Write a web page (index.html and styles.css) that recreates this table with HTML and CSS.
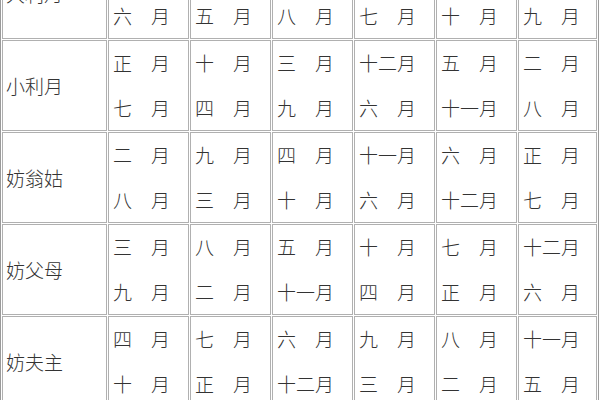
FILE: index.html
```html
<!DOCTYPE html>
<html lang="zh">
<head>
<meta charset="utf-8">
<title>嫁娶月份表</title>
<link rel="stylesheet" href="styles.css">
</head>
<body>
<table class="months">
  <colgroup>
    <col class="c-label"><col class="c-m"><col class="c-m"><col class="c-m"><col class="c-m"><col class="c-m"><col class="c-last">
  </colgroup>
  <tr>
    <td class="label">大利月</td>
    <td><div class="ln">十二月</div><div class="ln">六　月</div></td>
    <td><div class="ln">十一月</div><div class="ln">五　月</div></td>
    <td><div class="ln">二　月</div><div class="ln">八　月</div></td>
    <td><div class="ln">正　月</div><div class="ln">七　月</div></td>
    <td><div class="ln">四　月</div><div class="ln">十　月</div></td>
    <td><div class="ln">三　月</div><div class="ln">九　月</div></td>
  </tr>
  <tr>
    <td class="label">小利月</td>
    <td><div class="ln">正　月</div><div class="ln">七　月</div></td>
    <td><div class="ln">十　月</div><div class="ln">四　月</div></td>
    <td><div class="ln">三　月</div><div class="ln">九　月</div></td>
    <td><div class="ln">十二月</div><div class="ln">六　月</div></td>
    <td><div class="ln">五　月</div><div class="ln">十一月</div></td>
    <td><div class="ln">二　月</div><div class="ln">八　月</div></td>
  </tr>
  <tr>
    <td class="label">妨翁姑</td>
    <td><div class="ln">二　月</div><div class="ln">八　月</div></td>
    <td><div class="ln">九　月</div><div class="ln">三　月</div></td>
    <td><div class="ln">四　月</div><div class="ln">十　月</div></td>
    <td><div class="ln">十一月</div><div class="ln">六　月</div></td>
    <td><div class="ln">六　月</div><div class="ln">十二月</div></td>
    <td><div class="ln">正　月</div><div class="ln">七　月</div></td>
  </tr>
  <tr>
    <td class="label">妨父母</td>
    <td><div class="ln">三　月</div><div class="ln">九　月</div></td>
    <td><div class="ln">八　月</div><div class="ln">二　月</div></td>
    <td><div class="ln">五　月</div><div class="ln">十一月</div></td>
    <td><div class="ln">十　月</div><div class="ln">四　月</div></td>
    <td><div class="ln">七　月</div><div class="ln">正　月</div></td>
    <td><div class="ln">十二月</div><div class="ln">六　月</div></td>
  </tr>
  <tr>
    <td class="label">妨夫主</td>
    <td><div class="ln">四　月</div><div class="ln">十　月</div></td>
    <td><div class="ln">七　月</div><div class="ln">正　月</div></td>
    <td><div class="ln">六　月</div><div class="ln">十二月</div></td>
    <td><div class="ln">九　月</div><div class="ln">三　月</div></td>
    <td><div class="ln">八　月</div><div class="ln">二　月</div></td>
    <td><div class="ln">十一月</div><div class="ln">五　月</div></td>
  </tr>
</table>
</body>
</html>
```

FILE: styles.css
```css
html, body {
  margin: 0;
  padding: 0;
  background: #ffffff;
  overflow: hidden;
}

.months {
  margin-top: -54px;
  width: 599px;
  table-layout: fixed;
  border-collapse: separate;
  border-spacing: 1px;
  border: 1px solid #9a9a9a;
  font-family: "Noto Sans CJK SC", "Noto Sans CJK JP", sans-serif;
  font-size: 19px;
  font-weight: 300;
  color: #333333;
}

.c-label { width: 105px; }
.c-m { width: 81px; }
.c-last { width: 79px; }

.months td {
  box-sizing: border-box;
  height: 91px;
  border: 1px solid #b0b0b0;
  padding: 0 0 0 4px;
  vertical-align: middle;
  text-align: left;
  white-space: nowrap;
  overflow: hidden;
}

.months td.label {
  padding-left: 3px;
}

.ln {
  height: 44.5px;
  line-height: 44.5px;
}
```
